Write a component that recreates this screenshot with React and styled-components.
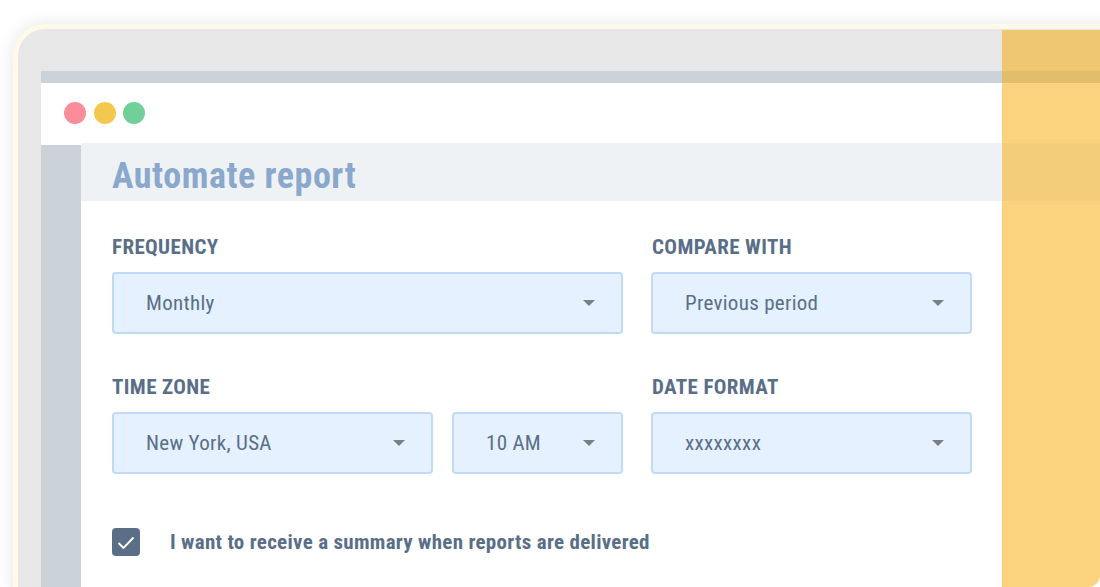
import React from 'react';
import styled, { createGlobalStyle } from 'styled-components';

const GlobalStyle = createGlobalStyle`
  html, body {
    margin: 0;
    padding: 0;
    background: #fff;
  }
  body {
    font-family: 'Roboto', 'Liberation Sans', sans-serif;
  }
`;

const Page = styled.div`
  position: relative;
  width: 1100px;
  height: 587px;
  padding: 24px 0 0 13px;
  box-sizing: border-box;
  overflow: hidden;
  background: #fff;
  border-radius: 0 0 12px 12px;
`;

const Frame = styled.div`
  width: 1130px;
  height: 600px;
  box-sizing: border-box;
  padding: 42px 0 0 23px;
  background: #e7e7e7;
  border: 5px solid #fff9e9;
  border-radius: 32px;
  box-shadow: 0 0 18px rgba(0, 0, 0, 0.11);
`;

const Screen = styled.div`
  height: 100%;
  background: #fff;
  border-top: 12px solid #ccd2d9;
`;

const TitleBar = styled.div`
  display: flex;
  align-items: center;
  gap: 7.5px;
  height: 60px;
  padding-left: 23px;
`;

const Dot = styled.span`
  width: 22px;
  height: 22px;
  border-radius: 50%;
  background: ${(props) => props.color};
`;

const Body = styled.div`
  display: flex;
  height: 100%;
`;

const Sidebar = styled.div`
  flex: 0 0 40px;
  margin-top: 2px;
  background: #ccd2d9;
`;

const Main = styled.div`
  flex: 1;
`;

const Header = styled.div`
  display: flex;
  align-items: center;
  height: 58px;
  box-sizing: border-box;
  padding: 7px 0 0 31px;
  background: #eff2f5;
`;

const Title = styled.h1`
  margin: 0;
  font-size: 36px;
  font-weight: 700;
  font-stretch: condensed;
  letter-spacing: 0.55px;
  color: #8aa8cb;
`;

const Form = styled.div`
  display: grid;
  grid-template-columns: 511px 321px;
  column-gap: 28px;
  row-gap: 41px;
  padding: 34px 0 0 31px;
`;

const Field = styled.div`
  display: flex;
  flex-direction: column;
  gap: 12px;
`;

const Label = styled.div`
  height: 25px;
  line-height: 25px;
  padding-left: ${(props) => (props.$inset ? '1px' : '0')};
  font-size: 21px;
  font-weight: 700;
  font-stretch: condensed;
  letter-spacing: 0.38px;
  color: #5a6f87;
`;

const Pair = styled.div`
  display: grid;
  grid-template-columns: 321px 171px;
  column-gap: 19px;
`;

const Select = styled.div`
  display: flex;
  align-items: center;
  justify-content: space-between;
  height: 62px;
  box-sizing: border-box;
  padding: 0 26px 0 32px;
  background: #e5f1ff;
  border: 2px solid #c0daf8;
  border-radius: 4px;
  font-size: 21px;
  font-stretch: condensed;
  letter-spacing: 0.3px;
  color: #5a6f87;
`;

const Arrow = styled.span`
  width: 0;
  height: 0;
  border-left: 6px solid transparent;
  border-right: 6px solid transparent;
  border-top: 6px solid #7b7f84;
`;

const CheckRow = styled.div`
  display: flex;
  align-items: center;
  gap: 30px;
  padding: 54px 0 0 31px;
`;

const Checkbox = styled.span`
  display: flex;
  align-items: center;
  justify-content: center;
  width: 28px;
  height: 28px;
  padding-top: 2px;
  box-sizing: border-box;
  border-radius: 4px;
  background: #5a6f87;
`;

const CheckText = styled.span`
  font-size: 21px;
  font-weight: 700;
  font-stretch: condensed;
  letter-spacing: 0.3px;
  color: #5a6f87;
`;

const Overlay = styled.div`
  position: absolute;
  top: 30px;
  right: 0;
  bottom: 0;
  width: 98px;
  background: rgba(247, 167, 0, 0.5);
`;

function Dropdown({ value }) {
  return (
    <Select>
      {value}
      <Arrow />
    </Select>
  );
}

export default function App() {
  return (
    <Page>
      <GlobalStyle />
      <Frame>
        <Screen>
          <TitleBar>
            <Dot color="#fb8d9a" />
            <Dot color="#f4c84e" />
            <Dot color="#70d098" />
          </TitleBar>
          <Body>
            <Sidebar />
            <Main>
              <Header>
                <Title>Automate report</Title>
              </Header>
              <Form>
                <Field>
                  <Label>FREQUENCY</Label>
                  <Dropdown value="Monthly" />
                </Field>
                <Field>
                  <Label $inset>COMPARE WITH</Label>
                  <Dropdown value="Previous period" />
                </Field>
                <Field>
                  <Label>TIME ZONE</Label>
                  <Pair>
                    <Dropdown value="New York, USA" />
                    <Dropdown value="10 AM" />
                  </Pair>
                </Field>
                <Field>
                  <Label $inset>DATE FORMAT</Label>
                  <Dropdown value="xxxxxxxx" />
                </Field>
              </Form>
              <CheckRow>
                <Checkbox>
                  <svg width="18" height="14" viewBox="0 0 18 14" fill="none">
                    <path d="M1.5 7 L6.5 12 L16.5 1.5" stroke="#fff" strokeWidth="1.9" />
                  </svg>
                </Checkbox>
                <CheckText>I want to receive a summary when reports are delivered</CheckText>
              </CheckRow>
            </Main>
          </Body>
        </Screen>
      </Frame>
      <Overlay />
    </Page>
  );
}
